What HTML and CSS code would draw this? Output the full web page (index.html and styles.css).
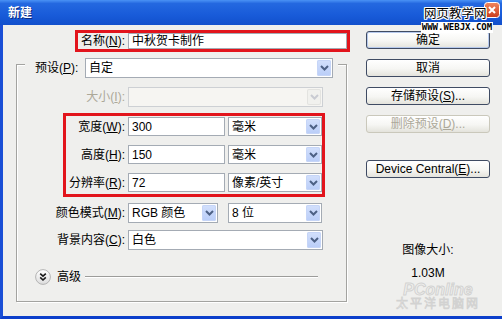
FILE: index.html
```html
<!DOCTYPE html>
<html lang="zh-CN">
<head>
<meta charset="utf-8">
<title>新建</title>
<link rel="stylesheet" href="styles.css">
</head>
<body>
<div class="window">
  <div class="titlebar">
    <span class="title">新建</span>
    <span class="close"><svg width="16" height="16" viewBox="0 0 16 16"><defs><linearGradient id="cg" x1="0" y1="0" x2="0" y2="1"><stop offset="0" stop-color="#f0875f"/><stop offset="1" stop-color="#c93c1c"/></linearGradient></defs><rect x="0.5" y="0.5" width="15" height="15" rx="3" fill="url(#cg)" stroke="#fff"/><path d="M5 5l6 6M11 5l-6 6" stroke="#fff" stroke-width="2"/></svg></span>
  </div>
  <div class="frame">
    <div class="left">
      <div class="name-box">
        <span class="lbl name-lbl">名称(<u>N</u>):</span>
        <div class="field name-input">中秋贺卡制作</div>
      </div>
      <div class="group">
        <div class="preset-row">
          <span class="lbl preset-lbl">预设(<u>P</u>):</span>
          <div class="field select preset-select"><span>自定</span><i class="arrow"><svg width="11" height="8" viewBox="0 0 11 8"><path d="M2 2l3.5 3.5L9 2" fill="none" stroke="#4d6185" stroke-width="2"/></svg></i></div>
        </div>
        <div class="row size-row">
          <span class="lbl lbl-col disabled">大小(<u>I</u>):</span>
          <div class="field select dis wide"><span></span><i class="arrow"><svg width="11" height="8" viewBox="0 0 11 8"><path d="M2 2l3.5 3.5L9 2" fill="none" stroke="#c9cbd2" stroke-width="2"/></svg></i></div>
        </div>
        <div class="dim-box">
          <div class="dim-row">
            <span class="lbl dim-lbl">宽度(<u>W</u>):</span>
            <div class="field num">300</div>
            <div class="field select unit"><span>毫米</span><i class="arrow"><svg width="11" height="8" viewBox="0 0 11 8"><path d="M2 2l3.5 3.5L9 2" fill="none" stroke="#4d6185" stroke-width="2"/></svg></i></div>
          </div>
          <div class="dim-row">
            <span class="lbl dim-lbl">高度(<u>H</u>):</span>
            <div class="field num">150</div>
            <div class="field select unit"><span>毫米</span><i class="arrow"><svg width="11" height="8" viewBox="0 0 11 8"><path d="M2 2l3.5 3.5L9 2" fill="none" stroke="#4d6185" stroke-width="2"/></svg></i></div>
          </div>
          <div class="dim-row">
            <span class="lbl dim-lbl">分辨率(<u>R</u>):</span>
            <div class="field num">72</div>
            <div class="field select unit"><span>像素/英寸</span><i class="arrow"><svg width="11" height="8" viewBox="0 0 11 8"><path d="M2 2l3.5 3.5L9 2" fill="none" stroke="#4d6185" stroke-width="2"/></svg></i></div>
          </div>
        </div>
        <div class="row color-row">
          <span class="lbl lbl-col">颜色模式(<u>M</u>):</span>
          <div class="field select mode"><span>RGB 颜色</span><i class="arrow"><svg width="11" height="8" viewBox="0 0 11 8"><path d="M2 2l3.5 3.5L9 2" fill="none" stroke="#4d6185" stroke-width="2"/></svg></i></div>
          <div class="field select bits"><span>8 位</span><i class="arrow"><svg width="11" height="8" viewBox="0 0 11 8"><path d="M2 2l3.5 3.5L9 2" fill="none" stroke="#4d6185" stroke-width="2"/></svg></i></div>
        </div>
        <div class="row bg-row">
          <span class="lbl lbl-col">背景内容(<u>C</u>):</span>
          <div class="field select wide"><span>白色</span><i class="arrow"><svg width="11" height="8" viewBox="0 0 11 8"><path d="M2 2l3.5 3.5L9 2" fill="none" stroke="#4d6185" stroke-width="2"/></svg></i></div>
        </div>
        <div class="advanced">
          <svg class="adv-icon" width="16" height="16" viewBox="0 0 16 16"><defs><linearGradient id="ag" x1="0" y1="0" x2="0" y2="1"><stop offset="0" stop-color="#ffffff"/><stop offset="1" stop-color="#dcdcdc"/></linearGradient></defs><circle cx="8" cy="8" r="7.4" fill="url(#ag)" stroke="#b4b4b4"/><path d="M5.2 4.6l2.8 2.6 2.8-2.6M5.2 8.4l2.8 2.6 2.8-2.6" fill="none" stroke="#1a1a1a" stroke-width="1.6"/></svg>
          <span class="adv-text">高级</span>
          <span class="adv-line"></span>
        </div>
      </div>
    </div>
    <div class="right">
      <div class="btn default">确定</div>
      <div class="btn">取消</div>
      <div class="btn">存储预设(<u>S</u>)...</div>
      <div class="btn disabled-btn">删除预设(<u>D</u>)...</div>
      <div class="btn device">Device Central(<u>E</u>)...</div>
      <div class="image-size">
        <div class="size-title">图像大小:</div>
        <div class="size-val">1.03M</div>
      </div>
    </div>
  </div>
  <div class="wm-site">网页教学网</div>
  <div class="wm-url">WWW.WEBJX.COM</div>
  <div class="wm-pc">
    <div class="wm-pc-logo">PConline</div>
    <div class="wm-pc-cn">太平洋电脑网</div>
  </div>
</div>
</body>
</html>
```

FILE: styles.css
```css
html, body {
  margin: 0;
  padding: 0;
}
body {
  width: 502px;
  height: 319px;
  overflow: hidden;
  font-family: "Liberation Sans", "Noto Sans CJK SC", sans-serif;
  font-size: 12px;
  line-height: 14px;
  color: #000;
  background: #efefed;
}
u {
  text-decoration: underline;
  text-underline-offset: 1px;
}
.window {
  position: relative;
  width: 502px;
  height: 319px;
  display: flex;
  flex-direction: column;
}
.titlebar {
  height: 25px;
  flex: none;
  box-sizing: border-box;
  padding: 0 2px 0 8px;
  display: flex;
  align-items: center;
  justify-content: space-between;
  background: linear-gradient(#4a92f5 0%, #2468e0 14%, #185bd9 60%, #1250cc 100%);
}
.title {
  color: #fff;
  font-weight: bold;
  font-size: 12px;
  text-shadow: 1px 1px 0 #0b2a80;
}
.close {
  align-self: flex-start;
  margin-top: 2px;
  width: 16px;
  height: 16px;
  display: block;
}
.close svg { display: block; }

.frame {
  flex: 1;
  display: flex;
  border-left: 3px solid #1a4fd6;
  border-bottom: 3px solid #0c3fcb;
  background: #efefed;
}
.left {
  width: 347px;
  flex: none;
}
.lbl {
  white-space: nowrap;
}
.disabled { color: #aca899; }

.field {
  box-sizing: border-box;
  border: 1px solid #a4abb4;
  background: #fff;
  display: flex;
  align-items: center;
  padding-left: 3px;
  white-space: nowrap;
  flex: none;
}
.select {
  justify-content: space-between;
}
.arrow {
  align-self: stretch;
  width: 14px;
  margin: 1px;
  border-radius: 2px;
  background: linear-gradient(#d3e0fc, #b9cdf8);
  box-shadow: inset 0 0 0 1px #c6d5f7;
  display: flex;
  align-items: center;
  justify-content: center;
}
.arrow svg { display: block; }
.dis {
  background: #f6f5f2;
  border-color: #cdd0d4;
}
.dis .arrow {
  background: #f1f1ee;
  box-shadow: inset 0 0 0 1px #e3e3e0;
}

.name-box {
  margin: 5px 0 0 72px;
  width: 275px;
  height: 22px;
  box-sizing: border-box;
  border: 3px solid #e2141c;
  display: flex;
  align-items: center;
}
.name-lbl {
  width: 47px;
  text-align: right;
  margin-right: 3px;
  flex: none;
}
.name-input {
  width: 219px;
  height: 16px;
}

.group {
  margin: 12px 0 0 13px;
  width: 331px;
  height: 238px;
  box-sizing: border-box;
  border: 1px solid #a3a3a0;
  box-shadow: inset 1px 1px 0 #fff, 1px 1px 0 #fff;
}
.preset-row {
  margin: -7px 0 0 8px;
  width: fit-content;
  height: 20px;
  display: flex;
  align-items: center;
  background: #efefed;
  padding: 0 5px 0 10px;
}
.preset-lbl {
  width: 50px;
  flex: none;
}
.preset-select {
  width: 248px;
  height: 20px;
}
.row {
  display: flex;
  align-items: center;
  height: 20px;
}
.lbl-col {
  width: 108px;
  text-align: right;
  margin-right: 3px;
  flex: none;
}
.size-row { margin-top: 9px; }
.wide {
  width: 195px;
  height: 20px;
}

.dim-box {
  margin: 6px 0 0 46px;
  width: 262px;
  box-sizing: border-box;
  border: 3px solid #e2141c;
  padding: 1px 0 2px;
  display: flex;
  flex-direction: column;
  gap: 9px;
}
.dim-row {
  display: flex;
  align-items: center;
  height: 19px;
}
.dim-lbl {
  width: 59px;
  text-align: right;
  margin-right: 3px;
  flex: none;
}
.num {
  width: 97px;
  height: 19px;
}
.unit {
  width: 94px;
  height: 19px;
  margin-left: 3px;
}

.color-row { margin-top: 6px; }
.mode {
  width: 90px;
  height: 20px;
}
.bits {
  width: 94px;
  height: 20px;
  margin-left: 10px;
}
.bg-row { margin-top: 7px; }

.advanced {
  margin-top: 19px;
  height: 16px;
  padding-left: 18px;
  display: flex;
  align-items: center;
}
.adv-icon { display: block; flex: none; }
.adv-text {
  margin-left: 6px;
  width: 24px;
}
.adv-line {
  margin-left: 4px;
  width: 233px;
  height: 0;
  border-top: 1px solid #9c9c9a;
  border-bottom: 1px solid #fff;
}

.right {
  margin-left: 16px;
  padding-top: 6px;
  display: flex;
  flex-direction: column;
}
.btn {
  width: 124px;
  height: 18px;
  box-sizing: border-box;
  border: 1px solid #3f4b63;
  border-radius: 3px;
  background: linear-gradient(#ffffff, #f6f6f3 55%, #e4e3dc);
  display: flex;
  align-items: center;
  justify-content: center;
  margin-bottom: 10px;
  white-space: nowrap;
}
.default {
  box-shadow: inset 0 0 0 1px #b6c9ec;
}
.disabled-btn {
  border-color: #cac8bb;
  color: #aca899;
}
.device {
  margin-top: 17px;
}
.image-size {
  margin: 55px 0 0 32px;
  width: 60px;
  text-align: center;
  white-space: nowrap;
}
.size-val {
  margin-top: 9px;
}

.wm-site {
  position: absolute;
  left: 424px;
  top: 6px;
  font-size: 12.5px;
  line-height: 16px;
  color: #000;
  text-shadow: 1px 0 0 #fff, -1px 0 0 #fff, 0 1px 0 #fff, 0 -1px 0 #fff, 1px 1px 0 #fff, -1px -1px 0 #fff, 1px -1px 0 #fff, -1px 1px 0 #fff;
}
.wm-url {
  position: absolute;
  left: 421px;
  top: 22px;
  width: 72px;
  height: 11px;
  background: #fff;
  font-family: "DejaVu Sans Mono", monospace;
  font-weight: bold;
  font-size: 9px;
  line-height: 11px;
  text-align: center;
  color: #000;
}
.wm-pc {
  position: absolute;
  left: 392px;
  top: 282px;
  width: 92px;
  text-align: center;
}
.wm-pc-logo {
  font-family: "Liberation Sans", sans-serif;
  font-style: italic;
  font-weight: bold;
  font-size: 16px;
  line-height: 16px;
  color: transparent;
  -webkit-text-stroke: 1px rgba(185, 185, 185, 0.55);
}
.wm-pc-cn {
  font-size: 12px;
  line-height: 13px;
  letter-spacing: 2px;
  color: transparent;
  -webkit-text-stroke: 0.8px rgba(185, 185, 185, 0.55);
}
```
